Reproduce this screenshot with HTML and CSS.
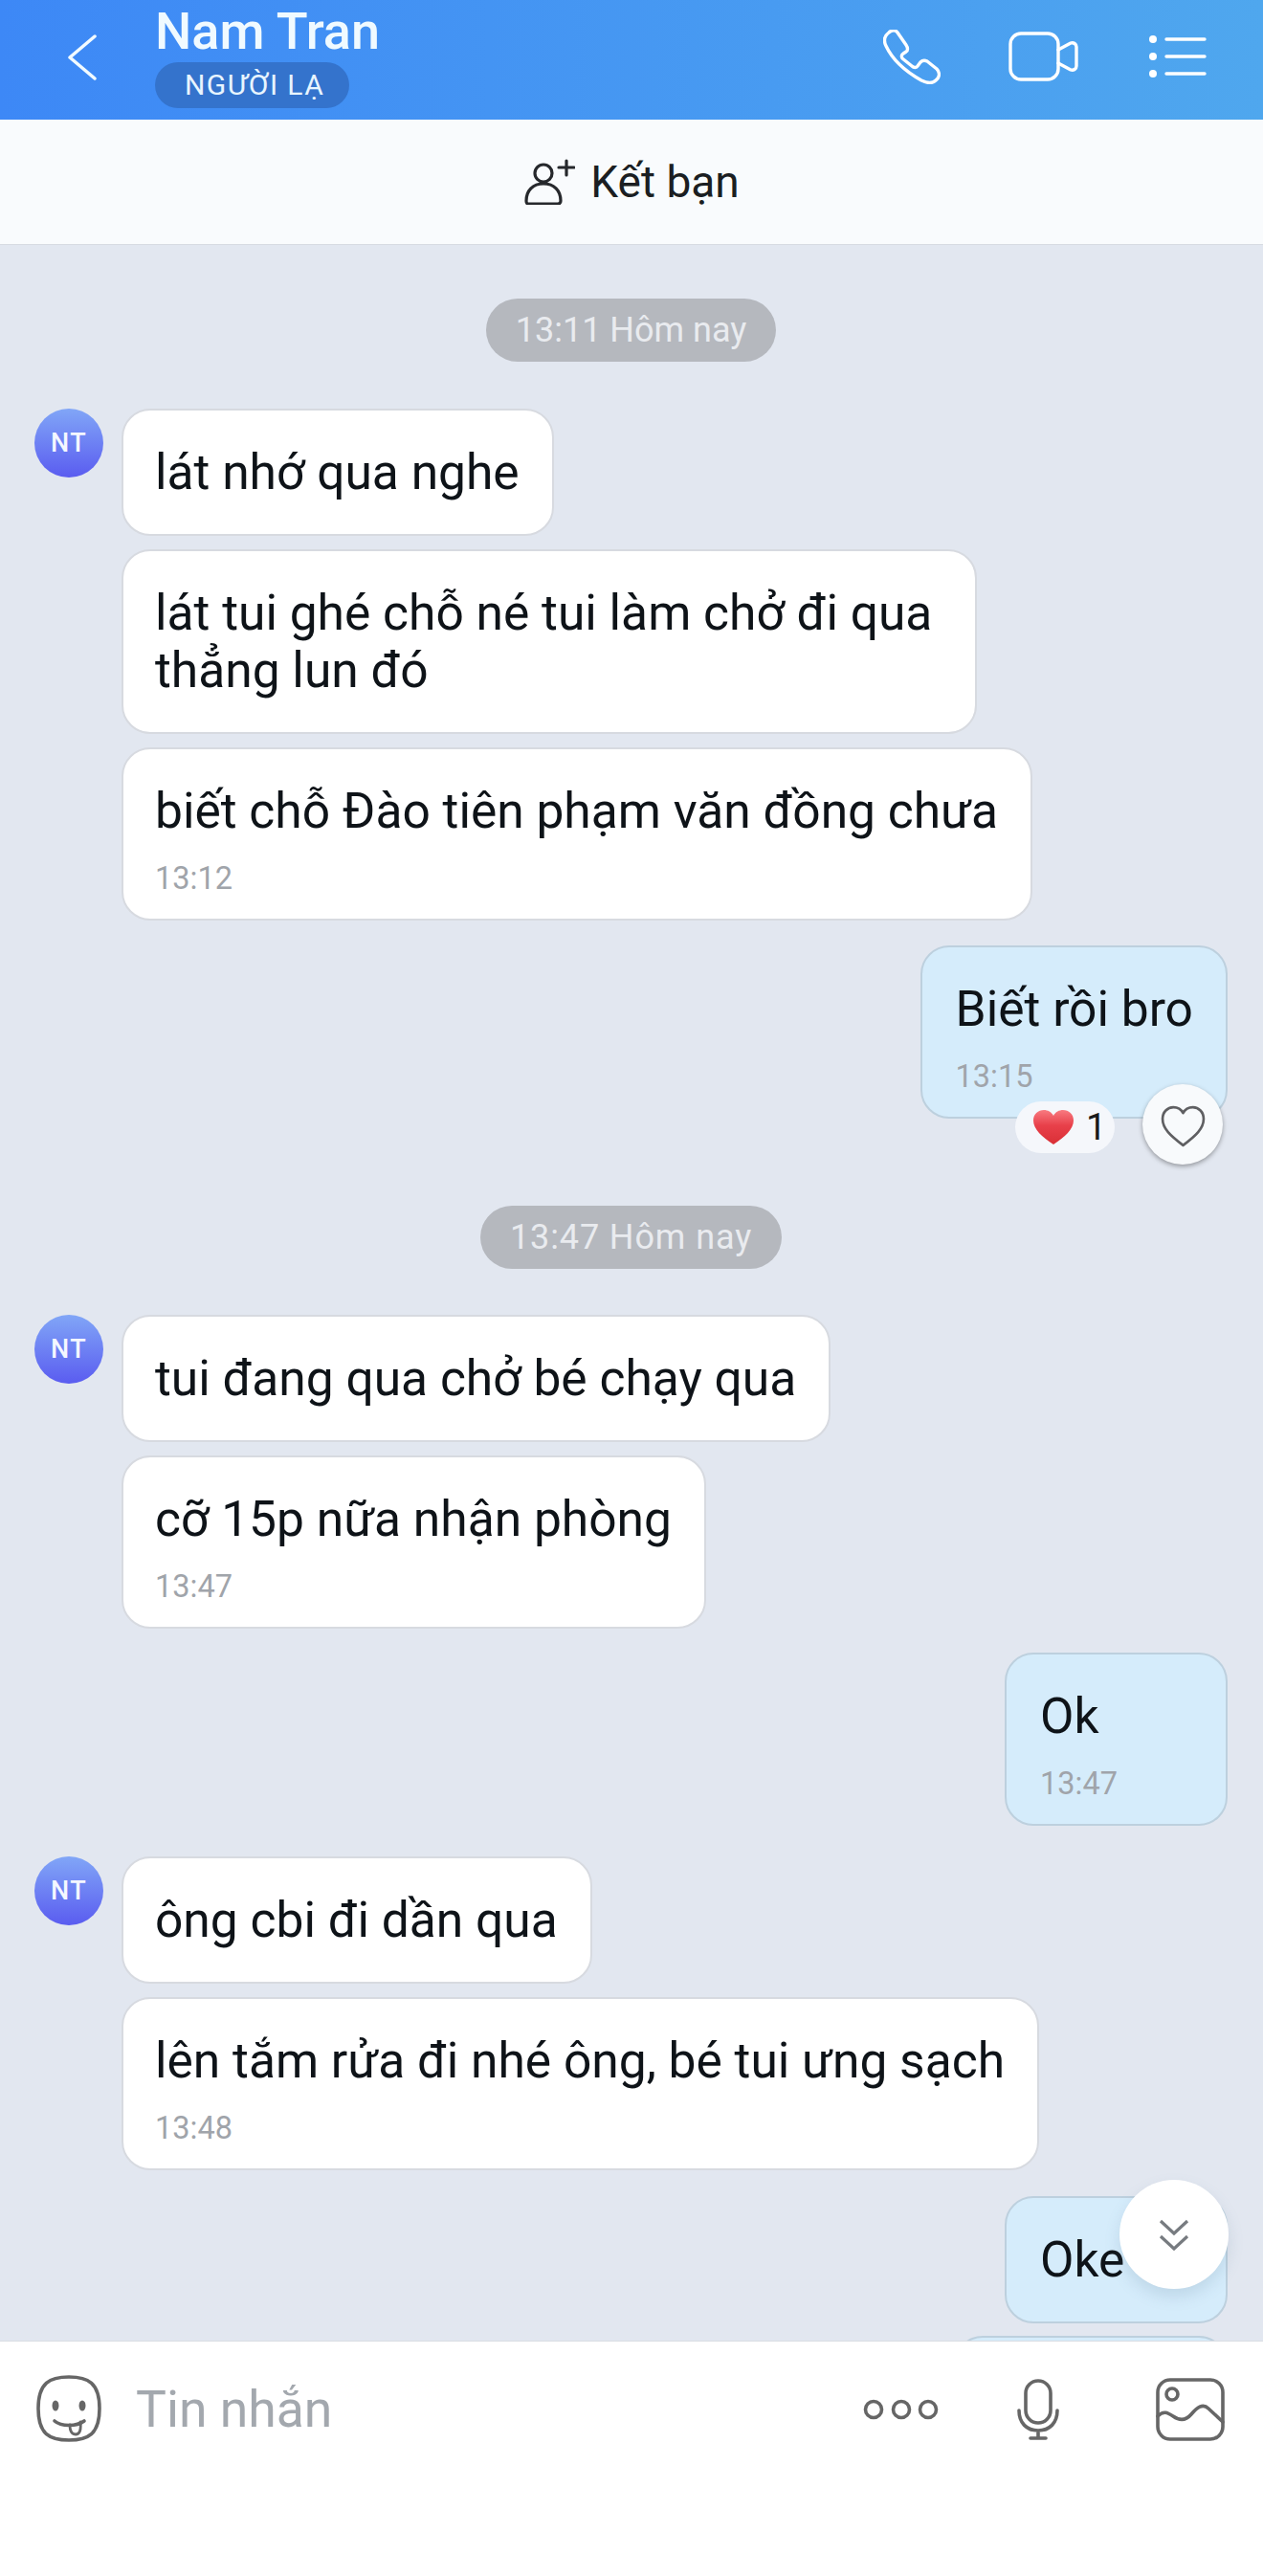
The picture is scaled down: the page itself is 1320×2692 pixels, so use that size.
FILE: index.html
```html
<!DOCTYPE html>
<html lang="vi">
<head>
<meta charset="utf-8">
<title>Nam Tran</title>
<link rel="stylesheet" href="styles.css">
</head>
<body>
<div class="app">
  <header class="topbar">
    <svg class="back" viewBox="0 0 30 48"><polyline points="28,2 2,24 28,46"/></svg>
    <div class="who">
      <div class="name">Nam Tran</div>
      <div class="badge">NGƯỜI LẠ</div>
    </div>
    <svg class="ico phone" viewBox="0 0 60 57"><path d="M6 3C9 0 13 0 15 3L24 16C26 19 26 22 24 23L21 25C19 26 19 28 20 30L30 38C32 40 35 40 36 38L39 34C41 32 44 32 46 33L56 41C59 44 59 48 57 51L55 53C51 57 46 56 40 53C24 44 10 32 3 17C0 11 2 6 6 3Z"/></svg>
    <svg class="ico video" viewBox="0 0 73 52"><rect x="2" y="2" width="50" height="48" rx="11"/><path d="M52 19L65 12C68 11 71 13 71 16V36C71 39 68 41 65 40L52 33"/></svg>
    <svg class="ico list" viewBox="0 0 60 44"><circle cx="4" cy="4" r="4" class="solid"/><circle cx="4" cy="22" r="4" class="solid"/><circle cx="4" cy="40" r="4" class="solid"/><path d="M18 4H58M18 22H58M18 40H58"/></svg>
  </header>
  <div class="friendbar">
    <svg class="addfriend" viewBox="0 0 54 48"><circle cx="21" cy="15" r="9"/><path d="M3 44C3 33 10 26 21 26C32 26 39 33 39 44C39 46 38 47 36 47H5C4 47 3 46 3 44Z"/><path d="M45 2V17M37 9H53"/></svg>
    <span>Kết bạn</span>
  </div>
  <main class="chat">
    <div class="pill pill-first">13:11 Hôm nay</div>
    <section class="group first">
      <div class="avatar">NT</div>
      <div class="stack">
        <div class="bubble">lát nhớ qua nghe</div>
        <div class="bubble wrapped">lát tui ghé chỗ né tui làm chở đi qua<br>thẳng lun đó</div>
        <div class="bubble timed">biết chỗ Đào tiên phạm văn đồng chưa<div class="time">13:12</div></div>
      </div>
    </section>
    <div class="bubble mine timed reacted">Biết rồi bro<div class="time">13:15</div>
      <div class="reaction">
        <svg class="heart" viewBox="0 0 42 36"><defs><linearGradient id="hg" x1="0" y1="0" x2="0" y2="1"><stop offset="0" stop-color="#f87a80"/><stop offset="0.45" stop-color="#e8404a"/><stop offset="1" stop-color="#d92f36"/></linearGradient></defs><path d="M21 36C9 28 0 20 0 11C0 4 5 0 11 0C15 0 19 2 21 6C23 2 27 0 31 0C37 0 42 4 42 11C42 20 33 28 21 36Z" fill="url(#hg)"/></svg>
        <span>1</span>
      </div>
      <div class="likebtn">
        <svg viewBox="0 0 46 44"><path d="M23 41C10 31 2 24 2 14C2 7 7 2 13 2C17 2 21 4 23 8C25 4 29 2 33 2C39 2 44 7 44 14C44 24 36 31 23 41Z"/></svg>
      </div>
    </div>
    <div class="pill pill-second">13:47 Hôm nay</div>
    <section class="group second">
      <div class="avatar">NT</div>
      <div class="stack">
        <div class="bubble">tui đang qua chở bé chạy qua</div>
        <div class="bubble timed">cỡ 15p nữa nhận phòng<div class="time">13:47</div></div>
      </div>
    </section>
    <div class="bubble mine timed">Ok<div class="time">13:47</div></div>
    <section class="group third">
      <div class="avatar">NT</div>
      <div class="stack">
        <div class="bubble">ông cbi đi dần qua</div>
        <div class="bubble timed">lên tắm rửa đi nhé ông, bé tui ưng sạch<div class="time">13:48</div></div>
      </div>
    </section>
    <div class="bubble mine oke">Oke</div>
    <div class="bubble mine clipped"></div>
    <div class="scrolldown">
      <svg viewBox="0 0 32 33"><path d="M2 2L16 15L30 2M2 18L16 31L30 18"/></svg>
    </div>
  </main>
  <footer class="composer">
    <svg class="cicon face" viewBox="0 0 68 70"><path class="line" d="M34 2C54 2 66 8 66 35C66 62 54 68 34 68C14 68 2 62 2 35C2 8 14 2 34 2Z"/><ellipse cx="20" cy="32" rx="3.5" ry="5.5" class="dot"/><ellipse cx="48" cy="32" rx="3.5" ry="5.5" class="dot"/><path class="line" d="M19 48C26 54 42 54 50 48"/><path class="thin" d="M35 52C35 60 38 62 41 62C45 62 47 58 46 49"/></svg>
    <div class="placeholder">Tin nhắn</div>
    <svg class="cicon dots" viewBox="0 0 80 22"><circle cx="11" cy="11" r="8.5" class="line"/><circle cx="40" cy="11" r="8.5" class="line"/><circle cx="68" cy="11" r="8.5" class="line"/></svg>
    <svg class="cicon mic" viewBox="0 0 44 64"><rect x="9" y="2" width="26" height="44" rx="13" class="line"/><path class="line" d="M2 33C2 46 10 54 22 54C34 54 42 46 42 33M22 54V62M14 62H30"/></svg>
    <svg class="cicon pic" viewBox="0 0 72 66"><rect x="2" y="2" width="68" height="62" rx="13" class="line"/><circle cx="17" cy="17" r="6" class="line"/><path class="line" d="M2 40C8 34 12 36 18 40C25 45 31 45 37 38C43 31 49 26 55 32L70 46"/></svg>
  </footer>
</div>
</body>
</html>
```

FILE: styles.css
```css
* { box-sizing: border-box; }
html, body { margin: 0; padding: 0; }
body {
  width: 1320px;
  height: 2692px;
  overflow: hidden;
  font-family: Roboto, "Liberation Sans", sans-serif;
  color: #0e1318;
}
.app { display: flex; flex-direction: column; height: 2692px; }

.topbar {
  height: 125px;
  flex: none;
  display: flex;
  align-items: flex-start;
  padding-left: 71px;
  background: linear-gradient(90deg, #3d88f6 0%, #4fa7ee 100%);
}
.back { width: 30px; height: 48px; margin-top: 36px; flex: none; fill: none; stroke: #f2fbff; stroke-width: 3.5; stroke-linecap: round; stroke-linejoin: round; }
.who { width: 761px; margin-left: 61px; flex: none; }
.name { font-size: 54px; line-height: 60px; margin-top: 3px; font-weight: 500; color: #f0faff; white-space: nowrap; }
.badge {
  width: 203px;
  height: 48px;
  margin-top: 2px;
  padding-left: 31px;
  border-radius: 24px;
  background: #3473cc;
  color: #e8f5ff;
  font-size: 30px;
  letter-spacing: 1.4px;
  line-height: 48px;
  white-space: nowrap;
}
.ico { flex: none; fill: none; stroke: #fff; stroke-width: 3.4; stroke-linecap: round; stroke-linejoin: round; }
.ico .solid { fill: #fff; stroke: none; }
.phone { width: 60px; height: 57px; margin-top: 31px; }
.video { width: 73px; height: 52px; margin-top: 33px; margin-left: 71px; }
.list { width: 60px; height: 44px; margin-top: 37px; margin-left: 74px; }

.friendbar {
  height: 131px;
  flex: none;
  display: flex;
  align-items: center;
  justify-content: center;
  gap: 16px;
  background: #f9fbfd;
  border-bottom: 1px solid #d7dbe2;
  font-size: 46px;
  color: #1b1e22;
}
.addfriend { width: 54px; height: 48px; fill: none; stroke: #26282c; stroke-width: 3.2; stroke-linecap: round; stroke-linejoin: round; }

.chat {
  position: relative;
  flex: 1;
  min-height: 0;
  overflow: hidden;
  display: flex;
  flex-direction: column;
  align-items: flex-start;
  background: #e2e7f0;
  padding: 56px 37px 0 36px;
}
.pill {
  align-self: center;
  height: 66px;
  padding: 0 31px;
  border-radius: 33px;
  background: #b5b8be;
  color: #e9ebef;
  font-size: 36px;
  line-height: 66px;
  white-space: nowrap;
}
.pill-second { margin-top: 91px; letter-spacing: 0.9px; height: 67px; }

.group { display: flex; gap: 19px; align-items: flex-start; }
.group.first { margin-top: 49px; }
.group.second { margin-top: 48px; }
.group.third { margin-top: 32px; }
.avatar {
  width: 72px;
  height: 72px;
  flex: none;
  border-radius: 50%;
  background: linear-gradient(180deg, #81a6f7 0%, #5a5cf0 100%);
  color: #f4f7ff;
  font-size: 27px;
  font-weight: 500;
  letter-spacing: 1.5px;
  line-height: 72px;
  text-align: center;
}
.stack { display: flex; flex-direction: column; align-items: flex-start; gap: 14px; }

.bubble {
  position: relative;
  padding: 35px 34px 34px 33px;
  border: 2.5px solid #d7dae0;
  border-radius: 30px;
  background: #fff;
  font-size: 51.5px;
  line-height: 60px;
  white-space: nowrap;
}
.bubble.wrapped { padding-right: 45px; }
.bubble.timed { padding-bottom: 22px; }
.time { margin-top: 20px; font-size: 32.5px; line-height: 40px; color: #a0a4aa; }

.mine {
  align-self: flex-end;
  min-width: 233px;
  padding-left: 35px;
  background: #d5ecfb;
  border-color: #bdd0de;
}
.reacted { margin-top: 26px; }
.mine.timed:not(.reacted) { margin-top: 25px; }
.oke { margin-top: 27px; }
.clipped { margin-top: 13px; width: 286px; height: 133px; }

.reaction {
  position: absolute;
  right: 116px;
  bottom: -38px;
  width: 104px;
  height: 54px;
  display: flex;
  align-items: center;
  gap: 13px;
  padding-left: 19px;
  border-radius: 27px;
  background: #f5f7fb;
  font-size: 38px;
  line-height: 54px;
  color: #1a1a1a;
}
.heart { width: 42px; height: 36px; flex: none; }
.likebtn {
  position: absolute;
  right: 3px;
  bottom: -50px;
  width: 84px;
  height: 84px;
  display: flex;
  align-items: center;
  justify-content: center;
  padding-top: 4px;
  border-radius: 50%;
  background: #f8fafc;
  box-shadow: 0 2px 5px rgba(0, 0, 0, 0.35);
}
.likebtn svg { width: 47px; height: 45px; fill: none; stroke: #5f5f62; stroke-width: 2.6; stroke-linejoin: round; }

.scrolldown {
  position: absolute;
  right: 36px;
  bottom: 54px;
  width: 114px;
  height: 114px;
  display: flex;
  align-items: center;
  justify-content: center;
  border-radius: 50%;
  background: #fff;
  box-shadow: 0 8px 16px rgba(90, 120, 150, 0.18);
}
.scrolldown svg { width: 32px; height: 33px; fill: none; stroke: #777b80; stroke-width: 3.2; }

.composer {
  height: 246px;
  flex: none;
  display: flex;
  align-items: flex-start;
  padding-left: 38px;
  background: #fff;
  border-top: 1px solid #d9dde3;
}
.cicon { flex: none; fill: none; }
.cicon .line { fill: none; stroke: #666; stroke-width: 3.6; stroke-linecap: round; stroke-linejoin: round; }
.cicon .thin { fill: none; stroke: #666; stroke-width: 2.8; stroke-linecap: round; }
.cicon .dot { fill: #666; }
.face { width: 68px; height: 70px; margin-top: 35px; }
.placeholder { width: 760px; margin-left: 36px; margin-top: 39px; font-size: 53.5px; line-height: 64px; color: #a3a8ae; white-space: nowrap; }
.dots { width: 80px; height: 22px; margin-top: 60px; }
.mic { width: 44px; height: 64px; margin-top: 39px; margin-left: 81px; }
.pic { width: 72px; height: 66px; margin-top: 38px; margin-left: 101px; }
```
